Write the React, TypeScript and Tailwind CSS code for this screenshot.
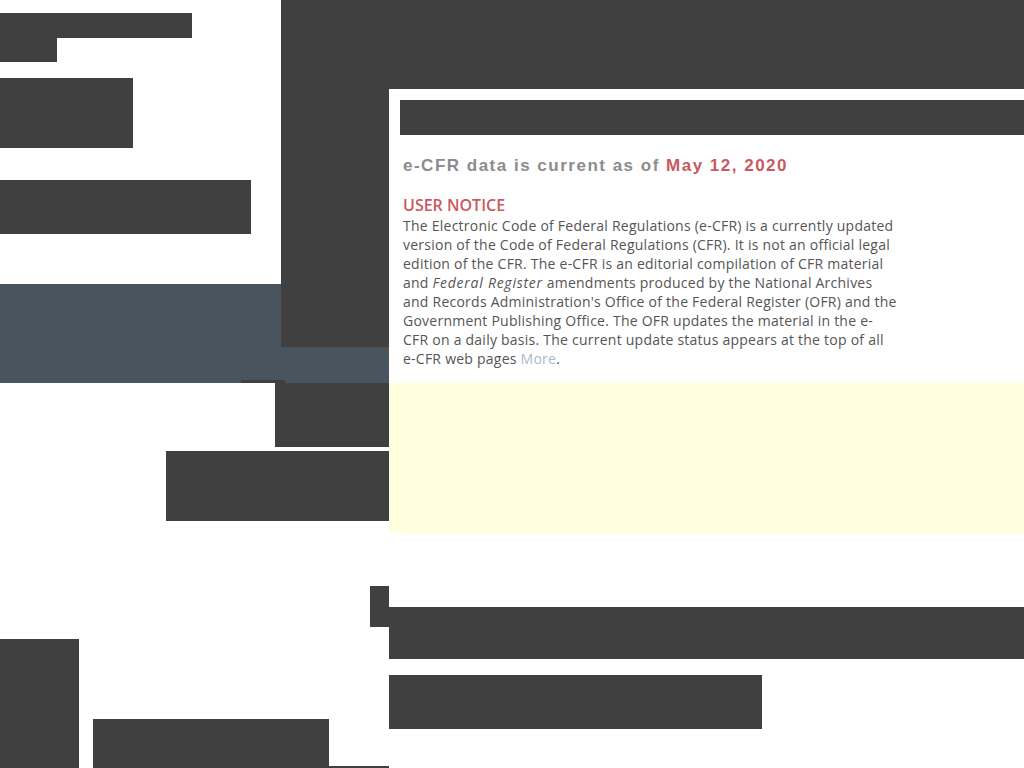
import React from "react";

const D = "bg-[#404040]";

export default function App() {
  return (
    <div className="w-[1024px] h-[768px] overflow-hidden bg-white flex">
      {/* Left column */}
      <div className="w-[389px] shrink-0 flex flex-col">
        <div className="flex h-[284px]">
          <div className="w-[281px] flex flex-col pt-[13px]">
            <div className={`${D} w-[192px] h-[25px]`} />
            <div className={`${D} w-[57px] h-[24px]`} />
            <div className={`${D} w-[133px] h-[70px] mt-[16px]`} />
            <div className={`${D} w-[251px] h-[54px] mt-[32px]`} />
          </div>
          <div className={`${D} flex-1`} />
        </div>
        <div className="bg-[#48555e] h-[99px] flex flex-col items-end">
          <div className={`${D} w-[108px] h-[63px]`} />
          <div className={`${D} w-[44px] h-[3px] mt-[33px] mr-[104px]`} />
        </div>
        <div className="flex flex-col items-end">
          <div className={`${D} w-[114px] h-[64px]`} />
          <div className={`${D} w-[223px] h-[70px] mt-[4px]`} />
          <div className={`${D} w-[19px] h-[41px] mt-[65px]`} />
        </div>
        <div className="flex mt-[12px] h-[129px]">
          <div className={`${D} w-[79px] h-full`} />
          <div className="flex-1 flex flex-col justify-end">
            <div className="flex items-end">
              <div className={`${D} ml-[14px] w-[236px] h-[49px]`} />
              <div className={`${D} flex-1 h-[2px]`} />
            </div>
          </div>
        </div>
      </div>

      {/* Right column */}
      <div className="flex-1 flex flex-col">
        <div className={`${D} h-[89px]`} />
        <div className="h-[294px] pl-[11px] pt-[11px]">
          <div className={`${D} h-[35px]`} />
          <div className="pl-[3px] pt-[20px] w-[520px]">
            <p
              className="text-[17px] leading-[22px] font-bold tracking-[1.5px] text-[#8c8c8c] whitespace-nowrap"
              style={{ fontFamily: '"Liberation Sans", Arial, sans-serif' }}
            >
              e-CFR data is current as of{" "}
              <span className="text-[#c95961]">May 12, 2020</span>
            </p>
            <div style={{ fontFamily: '"Open Sans", sans-serif' }} className="mt-[18px] w-[494px]">
              <h3 className="text-[16px] leading-[20px] font-semibold text-[#c95961]">USER NOTICE</h3>
              <p className="text-[14px] leading-[19px] font-normal tracking-[0.24px] text-[#555555] mt-[1px]">
                The Electronic Code of Federal Regulations (e-CFR) is a currently updated version of the
                Code of Federal Regulations (CFR). It is not an official legal edition of the CFR. The
                e-CFR is an editorial compilation of CFR material and{" "}
                <i className="tracking-[0.75px]">Federal Register</i> amendments produced by the National
                Archives and Records Administration's Office of the Federal Register (OFR) and the
                Government Publishing Office. The OFR updates the material in the e-CFR on a daily basis.
                The current update status appears at the top of all e-CFR web pages{" "}
                <span className="text-[#a9b9c9]">More</span>.
              </p>
            </div>
          </div>
        </div>
        <div className="bg-[#ffffdd] h-[150px]" />
        <div className={`${D} h-[52px] mt-[74px]`} />
        <div className={`${D} h-[54px] w-[373px] mt-[16px]`} />
      </div>
    </div>
  );
}
